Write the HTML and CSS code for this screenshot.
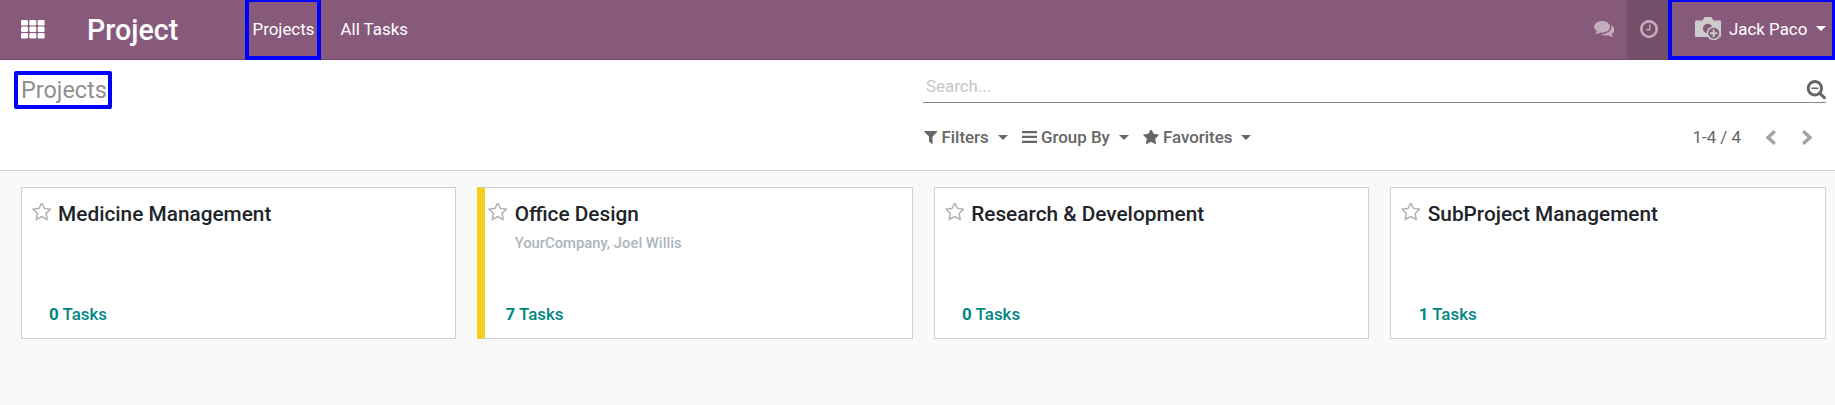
FILE: index.html
```html
<!DOCTYPE html>
<html lang="en">
<head>
<meta charset="utf-8">
<title>Projects</title>
<link rel="stylesheet" href="styles.css">
</head>
<body>
<svg class="defs" width="0" height="0">
  <symbol id="star-o" viewBox="64 128 1664 1587"><path d="M1201 1004l306-297-422-62-189-382-189 382-422 62 306 297-73 421 378-199 377 199zm527-357q0 22-26 48l-363 354 86 500q1 7 1 20 0 50-41 50-19 0-40-12l-449-236-449 236q-22 12-40 12-21 0-31.500-14.500t-10.500-35.500q0-6 2-20l86-500-364-354q-25-27-25-48 0-37 56-46l502-73 225-455q19-41 49-41t49 41l225 455 502 73q56 9 56 46z"/></symbol>
</svg>
<header class="navbar">
  <svg class="apps" viewBox="0 0 24 19"><g><rect x="0" y="0" width="7" height="5.400" rx="1.200"/><rect x="8.300" y="0" width="7" height="5.400" rx="1.200"/><rect x="16.600" y="0" width="7" height="5.400" rx="1.200"/><rect x="0" y="6.500" width="7" height="5.400" rx="1.200"/><rect x="8.300" y="6.500" width="7" height="5.400" rx="1.200"/><rect x="16.600" y="6.500" width="7" height="5.400" rx="1.200"/><rect x="0" y="13" width="7" height="5.400" rx="1.200"/><rect x="8.300" y="13" width="7" height="5.400" rx="1.200"/><rect x="16.600" y="13" width="7" height="5.400" rx="1.200"/></g></svg>
  <a class="brand">Project</a>
  <a class="menu marked">Projects</a>
  <a class="menu">All Tasks</a>
  <div class="systray">
    <span class="tray chat"><svg viewBox="0 256 1792 1408"><path d="M1408 768q0 139-94 257t-256.500 186.500-353.500 68.500q-86 0-176-16-124 88-278 128-36 9-86 16h-3q-11 0-20.500-8t-11.500-21q-1-3-1-6.500t.5-6.500 2-6l2.500-5 3.500-5.500 4-5 4.500-5 4-4.500q5-6 23-25t26-29.500 22.500-29 25-38.500 20.500-44q-124-72-195-177t-71-224q0-139 94-257t256.500-186.500 353.500-68.500 353.500 68.500 256.500 186.500 94 257zm384 256q0 120-71 224.500t-195 176.500q10 24 20.500 44t25 38.500 22.500 29 26 29.500 23 25q1 1 4 4.500t4.500 5 4 5 3.500 5.500l2.500 5 2 6 .5 6.500-1 6.500q-3 14-13 22t-22 7q-50-7-86-16-154-40-278-128-90 16-176 16-271 0-472-132 58 4 88 4 161 0 309-45t264-129q125-92 192-212t67-254q0-77-23-152 129 71 204 178t75 230z"/></svg></span>
    <span class="tray clock"><svg viewBox="128 128 1536 1536"><path d="M1024 544v448q0 14-9 23t-23 9h-320q-14 0-23-9t-9-23v-64q0-14 9-23t23-9h224v-352q0-14 9-23t23-9h64q14 0 23 9t9 23zm416 352q0-148-73-273t-198-198-273-73-273 73-198 198-73 273 73 273 198 198 273 73 273-73 198-198 73-273zm224 0q0 209-103 385.500t-279.500 279.500-385.500 103-385.500-103-279.500-279.500-103-385.500 103-385.500 279.500-279.500 385.500-103 385.500 103 279.500 279.500 103 385.500z"/></svg></span>
    <span class="user">
      <svg class="camera" viewBox="0 0 27 24">
        <path class="body" d="M1.500 3.500H7.500L9 .8Q9.500 0 10.500 0H15.500Q16.500 0 17 .8L18.500 3.500H25Q26 3.500 26 4.500V19Q26 20 25 20H1Q0 20 0 19V4.500Q0 3.500 1.500 3.500Z"/>
        <circle class="hole" cx="12.800" cy="11.600" r="4.900"/>
        <circle class="body" cx="18.700" cy="16.200" r="7"/>
        <circle class="hole" cx="18.700" cy="16.200" r="5.500"/>
        <path class="plus" d="M18.700 12.500V19.900M15 16.200H22.400"/>
      </svg>
      <span class="name">Jack Paco</span><i class="caret"></i>
    </span>
  </div>
</header>
<section class="panel">
  <div class="crumb-side"><h1 class="crumb">Projects</h1></div>
  <div class="tools">
    <div class="search"><span>Search...</span><svg viewBox="0 128 1728 1664"><path d="M1088 800v64q0 13-9.500 22.500t-22.500 9.500h-576q-13 0-22.500-9.500t-9.500-22.500v-64q0-13 9.500-22.500t22.500-9.500h576q13 0 22.500 9.500t9.500 22.500zm128 32q0-185-131.500-316.500t-316.500-131.500-316.500 131.500-131.500 316.500 131.500 316.500 316.500 131.500 316.500-131.500 131.500-316.500zm512 832q0 53-37.500 90.500t-90.500 37.500q-54 0-90-38l-343-342q-179 124-399 124-143 0-273.500-55.500t-225-150-150-225-55.500-273.500 55.500-273.500 150-225 225-150 273.500-55.500 273.500 55.500 225 150 150 225 55.500 273.500q0 220-124 399l343 343q37 37 37 90z"/></svg></div>
    <div class="options">
      <span class="option filters"><svg viewBox="191 256 1410 1408"><path d="M1595 295q17 41-14 70l-493 493v742q0 42-39 59-13 5-25 5-27 0-45-19l-256-256q-19-19-19-45v-486l-493-493q-31-29-14-70 17-39 59-39h1280q42 0 59 39z"/></svg><b>Filters</b><i class="caret"></i></span>
      <span class="option group"><svg viewBox="0 0 15 12"><path d="M0 0h15v2.300H0zM0 4.800h15v2.300H0zM0 9.700h15v2.300H0z"/></svg><b>Group By</b><i class="caret"></i></span>
      <span class="option favorites"><svg viewBox="64 128 1664 1587"><path d="M1728 647q0 22-26 48l-363 354 86 500q1 7 1 20 0 21-10.500 35.500t-30.500 14.500q-19 0-40-12l-449-236-449 236q-22 12-40 12-21 0-31.500-14.500t-10.500-35.500q0-6 2-20l86-500-364-354q-25-27-25-48 0-37 56-46l502-73 225-455q19-41 49-41t49 41l225 455 502 73q56 9 56 46z"/></svg><b>Favorites</b><i class="caret"></i></span>
      <span class="pager"><span>1-4 / 4</span>
        <svg viewBox="0 0 10 15"><path d="M8.800 1.200L2 7.500L8.800 13.800"/></svg>
        <svg viewBox="0 0 10 15"><path d="M1.200 1.200L8 7.500L1.200 13.800"/></svg>
      </span>
    </div>
  </div>
</section>
<main class="board">
  <article class="card"><svg class="star"><use href="#star-o"/></svg><div class="info"><h2>Medicine Management</h2></div><a class="tasks"><b>0</b> Tasks</a></article>
  <article class="card yellow"><svg class="star"><use href="#star-o"/></svg><div class="info"><h2>Office Design</h2><p>YourCompany, Joel Willis</p></div><a class="tasks"><b>7</b> Tasks</a></article>
  <article class="card"><svg class="star"><use href="#star-o"/></svg><div class="info"><h2>Research &amp; Development</h2></div><a class="tasks"><b>0</b> Tasks</a></article>
  <article class="card"><svg class="star"><use href="#star-o"/></svg><div class="info"><h2>SubProject Management</h2></div><a class="tasks"><b>1</b> Tasks</a></article>
</main>
</body>
</html>
```
FILE: styles.css
```css
* { box-sizing: border-box; }
body { margin: 0; height: 405px; overflow: hidden; background: #f9f9f9; font: 16.9px/24px Roboto, sans-serif; color: #666; }
svg { display: block; flex: none; fill: currentColor; }
h1, h2, p { margin: 0; }
.defs { position: absolute; }
.caret { flex: none; border: 5px solid transparent; border-top-color: currentColor; border-bottom: 0; }

.navbar { display: flex; align-items: stretch; height: 60px; background: #875a7b; border-bottom: 1px solid #704b66; color: #fff; }
.apps { width: 24px; height: 19px; margin: 20px 42px 0 21px; }
.brand { width: 158px; font-size: 28.600px; font-weight: 500; line-height: 60px; white-space: nowrap; }
.menu { height: 60px; padding: 0 19px 0 19.500px; line-height: 58px; white-space: nowrap; }
.menu.marked { width: 76px; padding: 0 0 0 3.500px; border: 4px solid #00f; border-top-width: 2px; line-height: 54px; }
.systray { display: flex; margin-left: auto; }
.tray { display: flex; color: #c3adbd; height: 59px; }
.chat svg { width: 20.500px; height: 16px; margin: 21px 13px 0 0; }
.clock { width: 41px; background: #764f6b; }
.clock svg { width: 18px; height: 18px; margin: 20px 0 0 13px; }
.user { display: flex; width: 167px; height: 60px; border: 4px solid #00f; border-top-width: 2px; border-right-width: 3px; }
.camera { width: 27px; height: 24px; margin: 15px 7px 0 23px; }
.camera .body { fill: #ccc; }
.camera .hole { fill: #875a7b; }
.camera .plus { fill: none; stroke: #ccc; stroke-width: 2; }
.name { width: 87px; line-height: 54px; white-space: nowrap; }
.user .caret { margin-top: 24px; }

.panel { display: flex; height: 111px; background: #fff; border-bottom: 1px solid #d5d5d7; }
.crumb-side { width: 923px; padding: 11px 0 0 14px; }
.crumb { width: 98px; height: 38px; padding-left: 3px; border: 4px solid #00f; border-radius: 2px; color: #8f8f8f; font-size: 23.400px; font-weight: 400; line-height: 30px; white-space: nowrap; }
.tools { width: 903px; }
.search { display: flex; justify-content: space-between; height: 43px; border-bottom: 1px solid #888; }
.search span { padding: 14px 0 0 3px; color: #c6c6c6; }
.search svg { width: 20px; height: 19.500px; margin-top: 19.500px; }
.options { display: flex; height: 24px; margin-top: 22px; }
.option { display: flex; align-items: center; }
.option b { margin-left: 4px; font-weight: 500; white-space: nowrap; }
.option .caret { margin-left: 9px; }
.filters { width: 99px; padding-left: 1px; }
.filters svg { width: 13.500px; height: 13px; }
.group { width: 121px; }
.group svg { width: 15px; height: 12px; }
.favorites svg { width: 16px; height: 15px; }
.pager { display: flex; align-items: center; margin-left: auto; padding-right: 14px; }
.pager span { margin-right: 25px; }
.pager svg { width: 10px; height: 15px; fill: none; stroke: #9fa4aa; stroke-width: 3.400; }
.pager svg + svg { margin-left: 26px; }

.board { display: grid; grid-template-columns: repeat(4, 1fr); gap: 21px; padding: 16px 9px 0 20.800px; }
.card { display: grid; grid-template: 1fr auto / 26.300px 1fr; height: 152px; padding: 10px 10px 12px; background: #fff; border: 1px solid #ced1d8; }
.card.yellow { padding-left: 3px; border-left: 8px solid #f7cd1f; }
.star { width: 19.500px; height: 18.500px; margin-top: 5.300px; color: #b0b0b0; }
.info h2 { color: #212529; font-size: 20.800px; font-weight: 500; line-height: 32px; white-space: nowrap; }
.info p { margin-top: 1px; color: #adb5bd; font-size: 14.800px; font-weight: 500; line-height: 24px; }
.tasks { grid-column: 1 / -1; padding-left: 17.200px; color: #008784; font-weight: 500; }
```
